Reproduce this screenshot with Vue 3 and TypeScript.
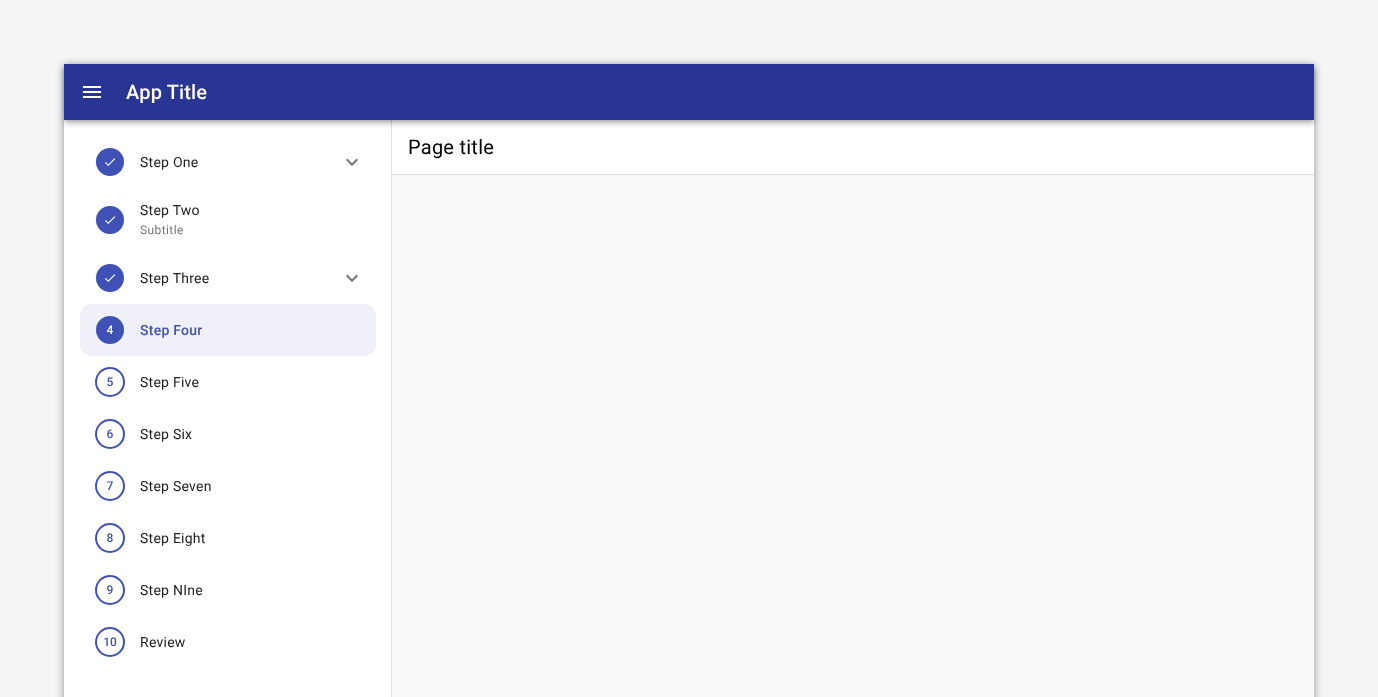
<script setup lang="ts">
interface Step {
  label: string;
  subtitle?: string;
  state: 'done' | 'current' | 'todo';
  badge?: string;
  expandable?: boolean;
}

const steps: Step[] = [
  { label: 'Step One', state: 'done', expandable: true },
  { label: 'Step Two', subtitle: 'Subtitle', state: 'done' },
  { label: 'Step Three', state: 'done', expandable: true },
  { label: 'Step Four', state: 'current', badge: '4' },
  { label: 'Step Five', state: 'todo', badge: '5' },
  { label: 'Step Six', state: 'todo', badge: '6' },
  { label: 'Step Seven', state: 'todo', badge: '7' },
  { label: 'Step Eight', state: 'todo', badge: '8' },
  { label: 'Step NIne', state: 'todo', badge: '9' },
  { label: 'Review', state: 'todo', badge: '10' },
];
</script>

<template>
  <div class="page">
    <div class="frame">
      <header class="appbar">
        <svg class="menu" width="24" height="24" viewBox="0 0 24 24" aria-hidden="true">
          <path d="M3 18h18v-2H3v2zm0-5h18v-2H3v2zm0-7v2h18V6H3z" fill="#fff" />
        </svg>
        <span class="app-title">App Title</span>
      </header>
      <div class="body">
        <nav class="sidebar">
          <div
            v-for="step in steps"
            :key="step.label"
            class="step"
            :class="[step.state, { tall: step.subtitle }]"
          >
            <span class="badge">
              <svg v-if="step.state === 'done'" width="14" height="14" viewBox="0 0 24 24" aria-hidden="true">
                <path d="M9 16.2 4.8 12l-1.4 1.4L9 19 21 7l-1.4-1.4z" fill="#fff" />
              </svg>
              <template v-else>{{ step.badge }}</template>
            </span>
            <span class="labels">
              <span class="label">{{ step.label }}</span>
              <span v-if="step.subtitle" class="subtitle">{{ step.subtitle }}</span>
            </span>
            <svg v-if="step.expandable" class="chevron" width="24" height="24" viewBox="0 0 24 24" aria-hidden="true">
              <path d="M7.41 8.59 12 13.17l4.59-4.58L18 10l-6 6-6-6z" fill="#757575" />
            </svg>
          </div>
        </nav>
        <main class="content">
          <div class="title-bar">Page title</div>
        </main>
      </div>
    </div>
  </div>
</template>

<style>
html,
body {
  margin: 0;
  height: 100%;
  overflow: hidden;
  background: #f5f5f5;
}
</style>

<style scoped>
.page {
  box-sizing: border-box;
  height: 697px;
  padding: 64px 64px 0;
  overflow: hidden;
  font-family: Roboto, "Liberation Sans", sans-serif;
  text-rendering: geometricPrecision;
  will-change: transform;
}
.frame {
  display: flex;
  flex-direction: column;
  height: 700px;
  background: #fff;
  box-shadow: 0 2px 8px rgba(0, 0, 0, 0.42);
}
.appbar {
  position: relative;
  z-index: 1;
  flex: none;
  display: flex;
  align-items: center;
  gap: 22px;
  box-sizing: border-box;
  height: 56px;
  padding: 0 16px;
  background: #283593;
  box-shadow: 0 2px 4px -1px rgba(0, 0, 0, 0.2), 0 4px 5px rgba(0, 0, 0, 0.14), 0 1px 10px rgba(0, 0, 0, 0.12);
}
.menu {
  flex: none;
  width: 24px;
  height: 24px;
}
.app-title {
  color: #fff;
  font-size: 20px;
  font-weight: 500;
  letter-spacing: 0.15px;
}
.body {
  flex: 1;
  display: flex;
  min-height: 0;
}
.sidebar {
  flex: none;
  box-sizing: border-box;
  width: 328px;
  padding: 16px 15px 0 16px;
  border-right: 1px solid #e0e0e0;
  background: #fff;
}
.step {
  display: flex;
  align-items: center;
  box-sizing: border-box;
  height: 52px;
  padding: 0 12px 0 16px;
  border-radius: 12px;
}
.step.tall {
  height: 64px;
}
.step.current {
  background: #eff0f8;
}
.badge {
  flex: none;
  display: flex;
  align-items: center;
  justify-content: center;
  box-sizing: border-box;
  width: 28px;
  height: 28px;
  border-radius: 50%;
  background: #3f51b5;
  color: #fff;
  font-size: 12px;
  font-weight: 500;
}
.step.todo .badge {
  width: 30px;
  height: 30px;
  margin: 0 -1px;
  border: 2px solid #3f51b5;
  background: #fff;
  color: #3f51b5;
}
.labels {
  flex: 1;
  display: flex;
  flex-direction: column;
  margin-left: 16px;
  min-width: 0;
}
.label {
  padding-top: 1px;
  margin-bottom: -1px;
  color: #212121;
  font-size: 14px;
  line-height: 20px;
  letter-spacing: 0.25px;
}
.step.current .label {
  color: #3f51b5;
  font-weight: 500;
}
.subtitle {
  color: #757575;
  font-size: 12px;
  line-height: 20px;
  letter-spacing: 0.4px;
}
.chevron {
  flex: none;
}
.content {
  flex: 1;
  min-width: 0;
  background: #fafafa;
}
.title-bar {
  box-sizing: border-box;
  height: 55px;
  padding: 0 16px;
  border-bottom: 1px solid #e0e0e0;
  background: #fff;
  color: #000;
  font-size: 20px;
  line-height: 54px;
  letter-spacing: 0.25px;
}
</style>
